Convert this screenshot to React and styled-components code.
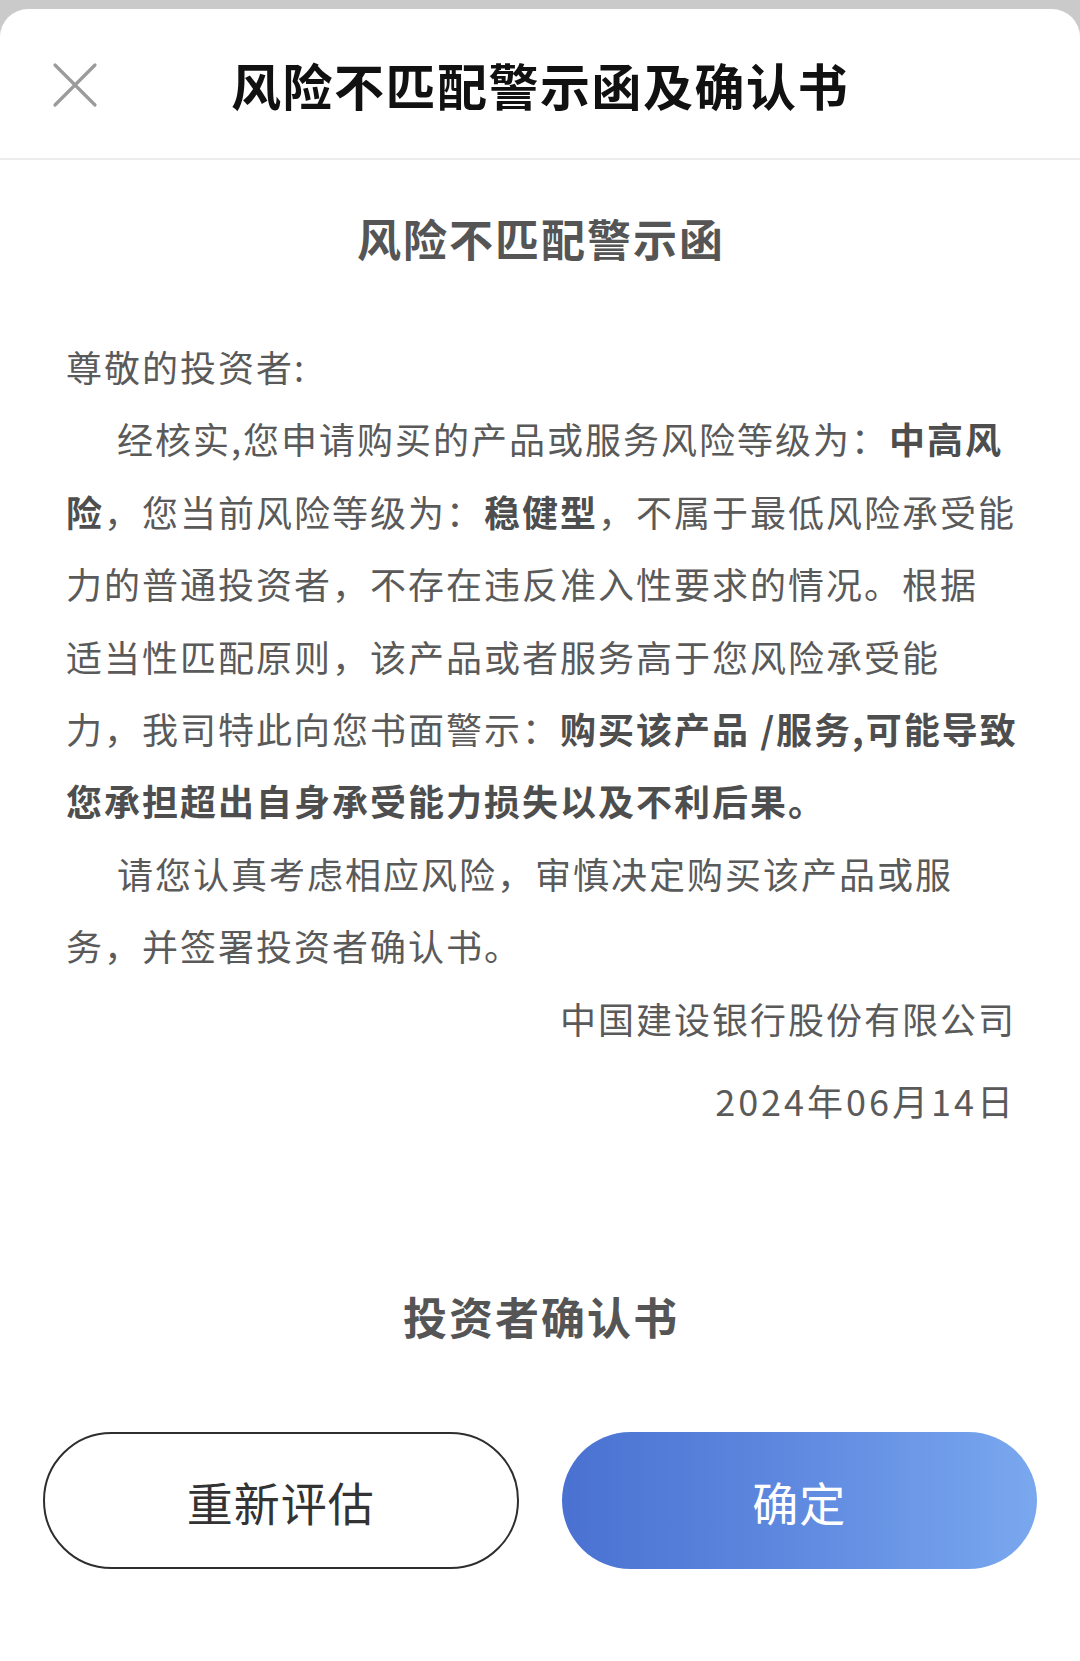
import React from "react";
import styled, { createGlobalStyle } from "styled-components";

const GlobalStyle = createGlobalStyle`
  html, body {
    margin: 0;
    padding: 0;
    background: #cacaca;
  }
  body {
    font-family: "Noto Sans CJK SC", "Noto Sans", "Liberation Sans", sans-serif;
    -webkit-font-smoothing: antialiased;
  }
  * { box-sizing: border-box; }
`;

const Page = styled.div`
  min-height: 100vh;
  padding-top: 9px;
  display: flex;
  flex-direction: column;
`;

const Sheet = styled.div`
  flex: 1;
  background: #ffffff;
  border-radius: 28px 28px 0 0;
  display: flex;
  flex-direction: column;
`;

const Header = styled.header`
  height: 151px;
  display: grid;
  grid-template-columns: 150px 1fr 150px;
  align-items: center;
  border-bottom: 2px solid #ececec;
`;

const CloseButton = styled.button`
  justify-self: start;
  margin-left: 52px;
  margin-top: 2px;
  width: 46px;
  height: 46px;
  padding: 0;
  border: none;
  background: none;
  display: flex;
  cursor: pointer;
`;

const HeaderTitle = styled.h1`
  margin: 0;
  text-align: center;
  font-size: 50px;
  line-height: 60px;
  font-weight: 700;
  letter-spacing: 1.5px;
  color: #111111;
`;

const Content = styled.main`
  padding: 0 64px 0 66px;
  display: flex;
  flex-direction: column;
`;

const SectionTitle = styled.h2`
  margin: ${(p) => p.$top}px 0 0;
  text-align: center;
  font-size: 44px;
  line-height: 60px;
  font-weight: 700;
  letter-spacing: 2px;
  color: #555555;
`;

const Letter = styled.div`
  margin-top: 62px;
  color: #5a5a5a;
  font-size: 36px;
  letter-spacing: 2px;
  line-height: 72.4px;
`;

const Line = styled.div`
  white-space: nowrap;
  padding-left: ${(p) => (p.$indent ? 51 : 0)}px;
  text-align: ${(p) => (p.$right ? "right" : "left")};
  margin-top: ${(p) => p.$gap || 0}px;
`;

const DateLine = styled(Line)`
  letter-spacing: 3px;
`;

const Strong = styled.b`
  font-weight: 700;
  color: #4e4e4e;
`;

const Actions = styled.div`
  margin: 86px 43px 0;
  display: grid;
  grid-template-columns: 1fr 1fr;
  gap: 43px;
`;

const ActionButton = styled.button`
  height: 137px;
  border-radius: 69px;
  font-family: inherit;
  font-size: 46px;
  letter-spacing: 1px;
  display: flex;
  align-items: center;
  justify-content: center;
  cursor: pointer;
  border: ${(p) => (p.$primary ? "none" : "2.5px solid #2e2e2e")};
  background: ${(p) =>
    p.$primary
      ? "linear-gradient(90deg, #4a71d1 0%, #5f8ae0 50%, #7aa8ef 100%)"
      : "#ffffff"};
  color: ${(p) => (p.$primary ? "#ffffff" : "#333333")};
`;

function CloseIcon() {
  return (
    <svg width="46" height="46" viewBox="0 0 46 46" fill="none">
      <path
        d="M3 3 L43 43 M43 3 L3 43"
        stroke="#9b9b9b"
        strokeWidth="3.2"
        strokeLinecap="round"
      />
    </svg>
  );
}

export default function App() {
  return (
    <>
      <GlobalStyle />
      <Page>
        <Sheet>
          <Header>
            <CloseButton aria-label="关闭">
              <CloseIcon />
            </CloseButton>
            <HeaderTitle>风险不匹配警示函及确认书</HeaderTitle>
            <span />
          </Header>
          <Content>
            <SectionTitle $top={48}>风险不匹配警示函</SectionTitle>
            <Letter>
              <Line>尊敬的投资者:</Line>
              <Line $indent>
                经核实,您申请购买的产品或服务风险等级为：<Strong>中高风</Strong>
              </Line>
              <Line>
                <Strong>险</Strong>，您当前风险等级为：<Strong>稳健型</Strong>，不属于最低风险承受能
              </Line>
              <Line>力的普通投资者，不存在违反准入性要求的情况。根据</Line>
              <Line>适当性匹配原则，该产品或者服务高于您风险承受能</Line>
              <Line>
                力，我司特此向您书面警示：<Strong>购买该产品 /服务,可能导致</Strong>
              </Line>
              <Line>
                <Strong>您承担超出自身承受能力损失以及不利后果。</Strong>
              </Line>
              <Line $indent>请您认真考虑相应风险，审慎决定购买该产品或服</Line>
              <Line>务，并签署投资者确认书。</Line>
              <Line $right>中国建设银行股份有限公司</Line>
              <DateLine $right $gap={10}>
                2024年06月14日
              </DateLine>
            </Letter>
            <SectionTitle $top={150}>投资者确认书</SectionTitle>
          </Content>
          <Actions>
            <ActionButton>重新评估</ActionButton>
            <ActionButton $primary>确定</ActionButton>
          </Actions>
        </Sheet>
      </Page>
    </>
  );
}
